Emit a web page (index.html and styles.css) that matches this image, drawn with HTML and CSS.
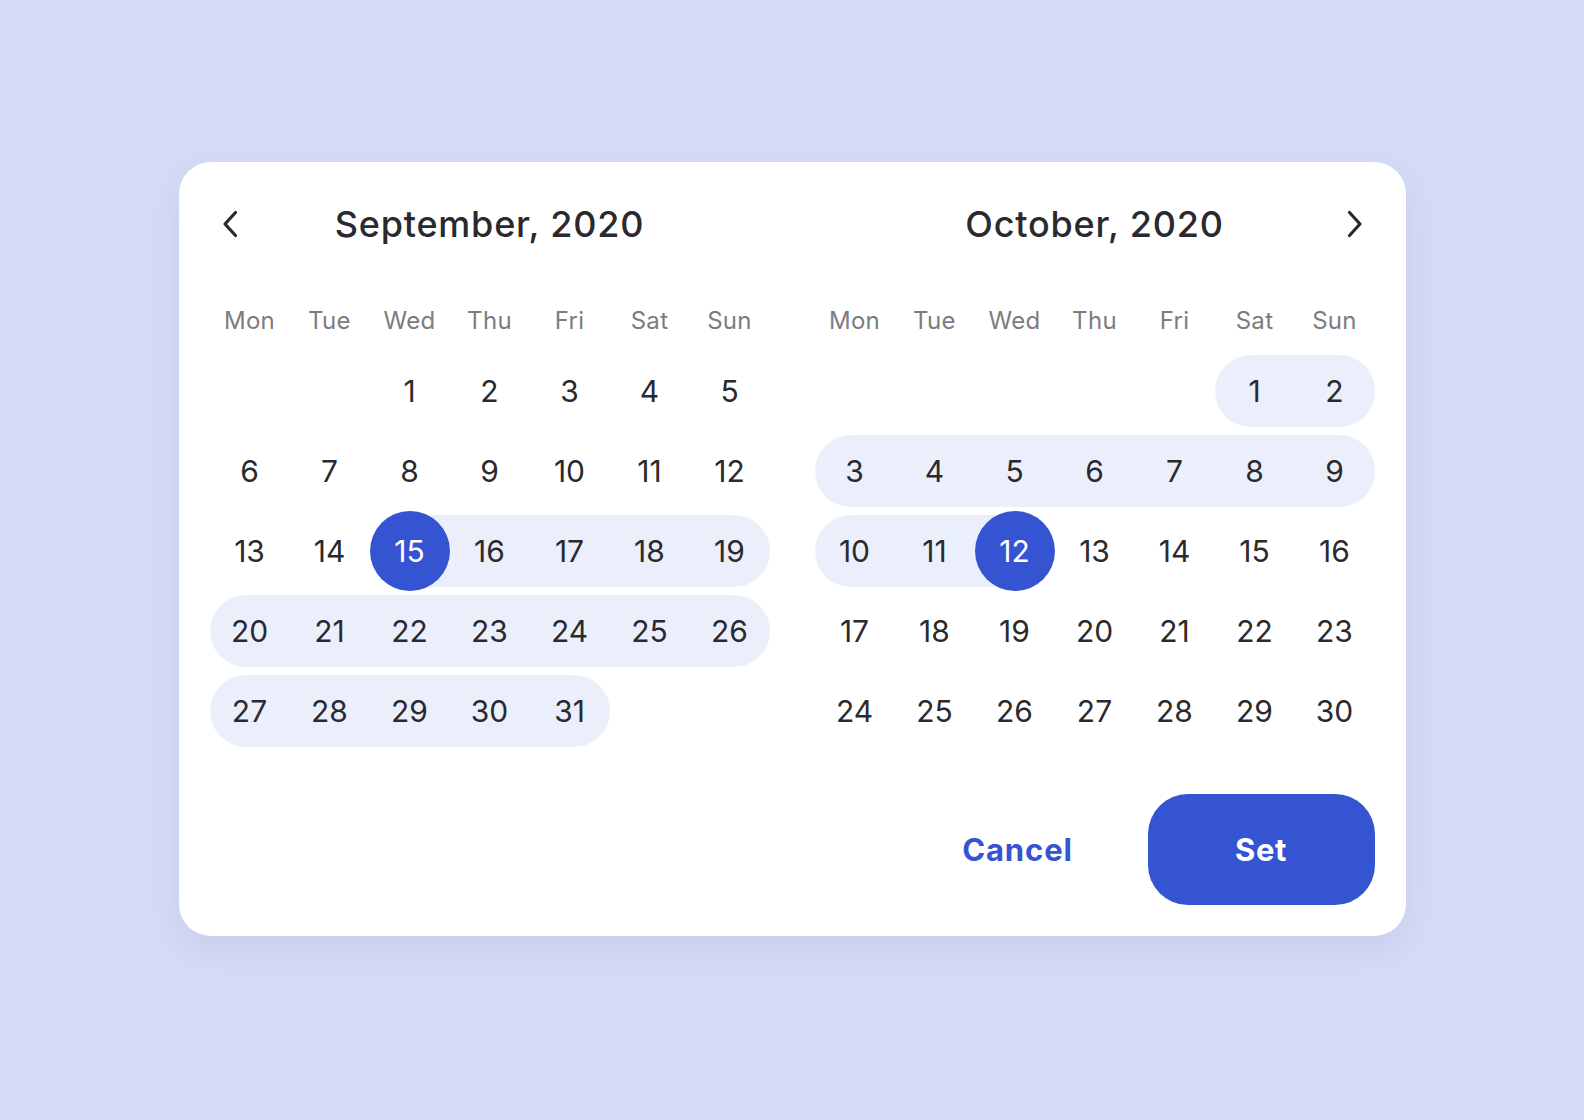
FILE: index.html
```html
<!doctype html>
<html>
<head>
<meta charset='UTF-8'>
<title>date range picker</title>
<link rel="stylesheet" href="styles.css">
</head>
<body>
<div class='picker'>
<div class='months'>
<div class='month'>
<div class='month-head'>
<button class='nav'><svg width='16' height='28' viewBox='0 0 16 28'><path d='M13.5 2.5 L3 14 L13.5 25.5' fill='none' stroke='#2a2a2e' stroke-width='3.2' stroke-linecap='round' stroke-linejoin='round'/></svg></button>
<div class='title'>September, 2020</div>
<div></div>
</div>
<div class='weekdays'><div>Mon</div><div>Tue</div><div>Wed</div><div>Thu</div><div>Fri</div><div>Sat</div><div>Sun</div></div>
<div class='days' id='sep'></div>
</div>
<div class='month'>
<div class='month-head'>
<div></div>
<div class='title'>October, 2020</div>
<button class='nav'><svg width='16' height='28' viewBox='0 0 16 28'><path d='M2.5 2.5 L13 14 L2.5 25.5' fill='none' stroke='#2a2a2e' stroke-width='3.2' stroke-linecap='round' stroke-linejoin='round'/></svg></button>
</div>
<div class='weekdays'><div>Mon</div><div>Tue</div><div>Wed</div><div>Thu</div><div>Fri</div><div>Sat</div><div>Sun</div></div>
<div class='days' id='oct'></div>
</div>
</div>
<div class='actions'>
<button class='cancel'>Cancel</button>
<button class='set'>Set</button>
</div>
</div>
<script>
let months = [
	{id: 'sep', offset: 2, days: 31, from: 15, to: 31, pick: 15},
	{id: 'oct', offset: 5, days: 30, from: 1, to: 12, pick: 12}
];

function fill_month(m)
{
	let grid = document.getElementById(m.id);
	for (let i = 0; i < m.offset; i++)
	{
		grid.appendChild(document.createElement('div'));
	}
	for (let d = 1; d <= m.days; d++)
	{
		let col = (m.offset + d - 1) % 7;
		let cell = document.createElement('div');
		cell.className = 'day';
		if (d >= m.from && d <= m.to)
		{
			cell.classList.add('band');
			if (d == m.from || col == 0) cell.classList.add('seg-start');
			if (d == m.to || col == 6) cell.classList.add('seg-end');
		}
		if (d == m.pick)
		{
			cell.classList.add('picked');
			if (d == m.from) cell.classList.add('pick-start');
			if (d == m.to) cell.classList.add('pick-end');
		}
		let num = document.createElement('span');
		num.textContent = d;
		cell.appendChild(num);
		grid.appendChild(cell);
	}
}

months.forEach(fill_month);
</script>
</body>
</html>
```

FILE: styles.css
```css
body
{
margin: 0;
padding-top: 162px;
min-height: 958px;
background-color: #d6dcf6;
font-family: Inter, "Noto Sans", sans-serif;
color: #2a2a2e;
}

button
{
font-family: inherit;
border: none;
background: none;
padding: 0;
cursor: pointer;
}

.picker
{
width: 1165px;
margin: 0 auto;
padding: 40px 31px 31px 31px;
background-color: #fff;
border-radius: 32px;
box-shadow: 0 12px 36px rgba(70, 90, 170, 0.12);
}

.months
{
display: flex;
gap: 45px;
}

.month
{
width: 560px;
}

.month-head
{
display: grid;
grid-template-columns: 40px 1fr 40px;
align-items: center;
height: 40px;
}

.nav
{
display: flex;
align-items: center;
justify-content: center;
height: 40px;
}

.title
{
text-align: center;
font-size: 36px;
font-weight: 500;
letter-spacing: 0.8px;
}

.weekdays
{
display: grid;
grid-template-columns: repeat(7, 80px);
margin-top: 47px;
height: 62px;
align-items: center;
text-align: center;
font-size: 24px;
letter-spacing: 0.3px;
color: #7c7c80;
}

.days
{
display: grid;
grid-template-columns: repeat(7, 80px);
grid-auto-rows: 80px;
}

.day
{
position: relative;
display: flex;
align-items: center;
justify-content: center;
font-size: 30px;
}

.day span
{
position: relative;
z-index: 1;
display: flex;
align-items: center;
justify-content: center;
width: 80px;
height: 80px;
border-radius: 50%;
}

.day.band::before
{
content: '';
position: absolute;
top: 4px;
bottom: 4px;
left: 0;
right: 0;
background-color: #ebeefb;
}

.day.seg-start::before
{
border-top-left-radius: 36px;
border-bottom-left-radius: 36px;
}

.day.seg-end::before
{
border-top-right-radius: 36px;
border-bottom-right-radius: 36px;
}

.day.pick-start::before
{
left: 50%;
border-radius: 0;
}

.day.pick-end::before
{
right: 50%;
border-radius: 0;
}

.day.picked span
{
background-color: #3554d1;
color: #fff;
}

.actions
{
display: flex;
justify-content: flex-end;
align-items: center;
gap: 40px;
margin-top: 43px;
}

.cancel
{
width: 180px;
height: 111px;
font-size: 31px;
font-weight: 700;
letter-spacing: 0.9px;
color: #3554d1;
}

.set
{
width: 227px;
height: 111px;
border-radius: 40px;
background-color: #3554d1;
color: #fff;
font-size: 31px;
font-weight: 700;
letter-spacing: 0.6px;
}
```
